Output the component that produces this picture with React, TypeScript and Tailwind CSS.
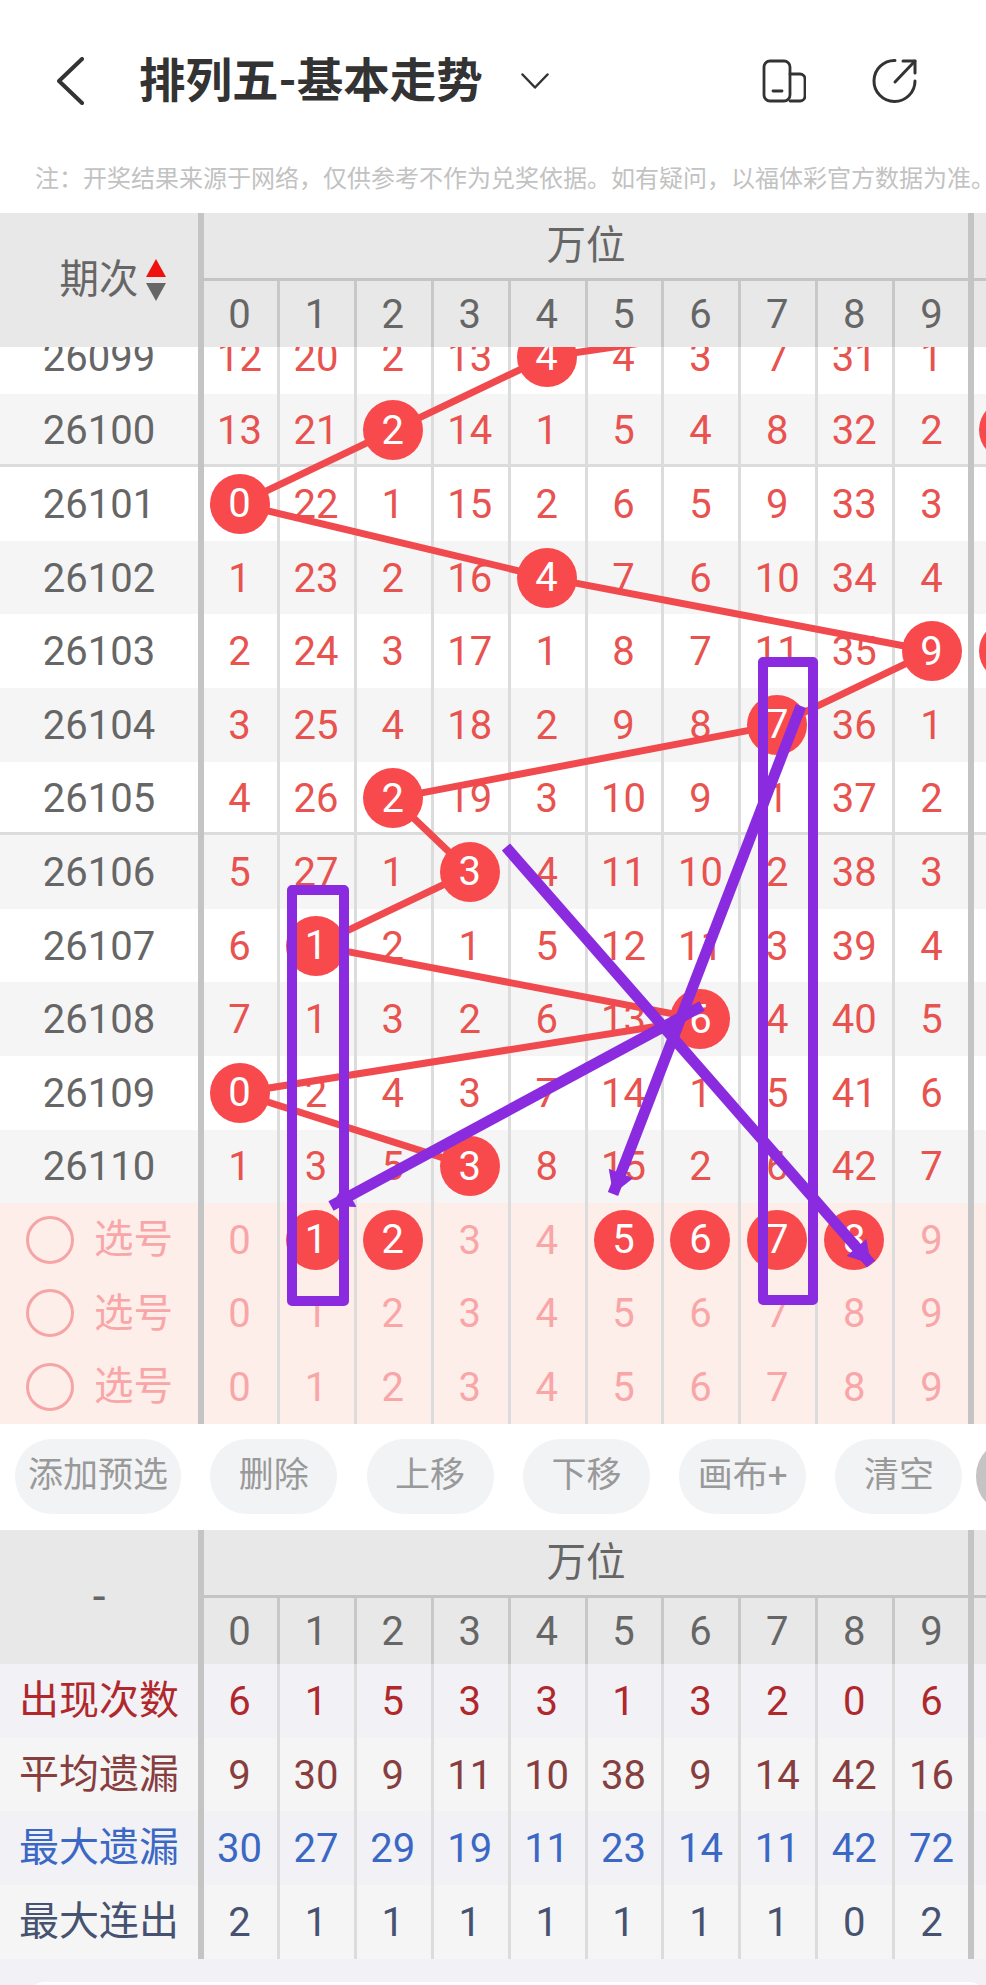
import React from 'react';

const DIGITS = [0, 1, 2, 3, 4, 5, 6, 7, 8, 9];
const CX = [239, 316, 393, 470, 547, 624, 701, 778, 855, 932];

// period, omission values, hit column, hit in the next group
const ROWS: { id: number; vals: number[]; hit: number; next?: boolean; line?: boolean }[] = [
  { id: 26099, vals: [12, 20, 2, 13, 4, 4, 3, 7, 31, 1], hit: 4 },
  { id: 26100, vals: [13, 21, 2, 14, 1, 5, 4, 8, 32, 2], hit: 2, next: true, line: true },
  { id: 26101, vals: [0, 22, 1, 15, 2, 6, 5, 9, 33, 3], hit: 0 },
  { id: 26102, vals: [1, 23, 2, 16, 4, 7, 6, 10, 34, 4], hit: 4 },
  { id: 26103, vals: [2, 24, 3, 17, 1, 8, 7, 11, 35, 9], hit: 9, next: true },
  { id: 26104, vals: [3, 25, 4, 18, 2, 9, 8, 7, 36, 1], hit: 7 },
  { id: 26105, vals: [4, 26, 2, 19, 3, 10, 9, 1, 37, 2], hit: 2, line: true },
  { id: 26106, vals: [5, 27, 1, 3, 4, 11, 10, 2, 38, 3], hit: 3 },
  { id: 26107, vals: [6, 1, 2, 1, 5, 12, 11, 3, 39, 4], hit: 1 },
  { id: 26108, vals: [7, 1, 3, 2, 6, 13, 6, 4, 40, 5], hit: 6 },
  { id: 26109, vals: [0, 2, 4, 3, 7, 14, 1, 5, 41, 6], hit: 0 },
  { id: 26110, vals: [1, 3, 5, 3, 8, 15, 2, 6, 42, 7], hit: 3 },
];

const PICKS = [[1, 2, 5, 6, 7, 8], [], []];

const STATS = [
  { label: '出现次数', vals: [6, 1, 5, 3, 3, 1, 3, 2, 0, 6], color: 'text-[#b0282c]', bg: 'bg-[#f1f1f6]' },
  { label: '平均遗漏', vals: [9, 30, 9, 11, 10, 38, 9, 14, 42, 16], color: 'text-[#873e3e]', bg: 'bg-[#f5f5f6]' },
  { label: '最大遗漏', vals: [30, 27, 29, 19, 11, 23, 14, 11, 42, 72], color: 'text-[#3a68c4]', bg: 'bg-[#f1f1f6]' },
  { label: '最大连出', vals: [2, 1, 1, 1, 1, 1, 1, 1, 0, 2], color: 'text-[#465270]', bg: 'bg-[#f5f5f6]' },
];

const BUTTONS = ['删除', '上移', '下移', '画布+', '清空'];

const cellWidth = (i: number) => {
  if (i === 0) return 'w-[76px] pr-[2px]';
  if (i === 9) return 'w-[72.9px]';
  return 'w-[76.9px] pr-[2px]';
};

const Ball = ({ n }: { n: number }) => (
  <span className="relative z-20 flex h-[60px] w-[60px] shrink-0 items-center justify-center rounded-full bg-[#f84a4d] pt-[1px] text-white">
    {n}
  </span>
);

const Cell = ({ i, border, children }: { i: number; border: string; children: React.ReactNode }) => (
  <div className={`flex shrink-0 items-center justify-center ${cellWidth(i)} ${i < 9 ? `border-r-[3px] ${border}` : ''}`}>
    {children}
  </div>
);

const Num = ({ v }: { v: number }) => <span className="pt-[2px]">{v}</span>;

const TableHead = ({ left }: { left: React.ReactNode }) => (
  <div className="flex h-[134px] bg-[#e8e8e8] text-[#666]">
    <div className="flex w-[204px] shrink-0 items-center justify-center border-r-[6px] border-[#c4c4c4]">{left}</div>
    <div className="flex flex-1 flex-col">
      <div className="flex h-[68px] border-b-[3px] border-[#c4c4c4]">
        <div className="flex w-[764px] shrink-0 items-center justify-center text-[39.5px]">万位</div>
        <div className="w-[6px] bg-[#c4c4c4]" />
      </div>
      <div className="flex flex-1">
        {DIGITS.map((d) => (
          <Cell key={d} i={d} border="border-[#c8c8c8]">
            <Num v={d} />
          </Cell>
        ))}
        <div className="w-[6px] bg-[#c4c4c4]" />
      </div>
    </div>
  </div>
);

const arrowHead = (x1: number, y1: number, x2: number, y2: number) => {
  const len = Math.hypot(x2 - x1, y2 - y1);
  const ux = (x2 - x1) / len;
  const uy = (y2 - y1) / len;
  const bx = x2 - ux * 22;
  const by = y2 - uy * 22;
  return `${x2},${y2} ${bx - uy * 13},${by + ux * 13} ${bx + uy * 13},${by - ux * 13}`;
};

const PURPLE_LINES = [
  [702, 1006, 331, 1206],
  [801, 706, 613, 1194],
  [506, 847, 871, 1264],
];

export default function App() {
  const centers = ROWS.map((r, i) => [CX[r.hit], 356.8 + 73.6 * i]);

  return (
    <div className="relative h-[1985px] w-[986px] overflow-hidden bg-white font-['Roboto','Noto_Sans_CJK_SC',sans-serif] text-[40px] leading-none">
      {/* title bar */}
      <div className="flex h-[162px] items-center pl-[57px] pr-[68px]">
        <svg width="28" height="48" viewBox="0 0 28 48" className="shrink-0" fill="none" stroke="#333" strokeWidth="4" strokeLinecap="round" strokeLinejoin="round">
          <polyline points="25,2 2,24 25,46" />
        </svg>
        <div className="ml-[54px] whitespace-nowrap text-[46.5px] font-bold text-[#333]">排列五-基本走势</div>
        <svg width="28" height="16" viewBox="0 0 28 16" className="ml-[38px] shrink-0" fill="none" stroke="#333" strokeWidth="2.5" strokeLinecap="round" strokeLinejoin="round">
          <polyline points="1.5,1.5 14,14.5 26.5,1.5" />
        </svg>
        <div className="ml-auto flex items-center gap-[66px]">
          <svg width="44" height="44" viewBox="0 0 44 44" fill="none" stroke="#333" strokeWidth="2.8" strokeLinecap="round" strokeLinejoin="round">
            <rect x="2" y="2" width="26" height="40" rx="6" />
            <path d="M28 15h10a5 5 0 0 1 5 5v17a5 5 0 0 1-5 5H28" />
            <path d="M11 32h9" />
          </svg>
          <svg width="46" height="46" viewBox="0 0 46 46" fill="none" stroke="#333" strokeWidth="3" strokeLinecap="round" strokeLinejoin="round">
            <path d="M23 2.5A20.5 20.5 0 1 0 43 23" />
            <path d="M23 24 43 3" />
            <path d="M31 3h12v12" />
          </svg>
        </div>
      </div>
      <div className="h-[51px] overflow-hidden whitespace-nowrap pl-[35px] text-[24px] leading-[34px] text-[#c2c2c2]">
        注：开奖结果来源于网络，仅供参考不作为兑奖依据。如有疑问，以福体彩官方数据为准。
      </div>

      <TableHead
        left={
          <div className="flex items-center pl-[28px] text-[39.5px]">
            <span>期次</span>
            <svg width="22" height="42" viewBox="0 0 22 42" className="ml-[6px]">
              <polygon points="11,0 21,18 1,18" fill="#f01010" />
              <polygon points="1,24 21,24 11,42" fill="#666" />
            </svg>
          </div>
        }
      />

      {/* period rows */}
      <div className="relative h-[856px] overflow-hidden text-[#e8524f]">
        <div className="-mt-[27px]">
          {ROWS.map((r, i) => (
            <div key={r.id} className={`flex h-[73.6px] ${r.line ? 'shadow-[inset_0_-3px_0_#dcdcdc]' : ''} ${i % 2 === 1 ? 'bg-[#f5f5f6]' : 'bg-white'}`}>
              <div className="flex w-[204px] shrink-0 items-center justify-center border-r-[6px] border-[#c4c4c4] text-[#666]">
                <Num v={r.id} />
              </div>
              {r.vals.map((v, k) => (
                <Cell key={k} i={k} border="border-[#dcdcdc]">
                  {k === r.hit ? <Ball n={v} /> : <Num v={v} />}
                </Cell>
              ))}
              <div className="w-[6px] shrink-0 bg-[#c4c4c4]" />
              {r.next && (
                <div className="flex items-center pl-[5px]">
                  <Ball n={0} />
                </div>
              )}
            </div>
          ))}
        </div>
        <svg className="absolute left-0 top-0 z-10" width="986" height="856" viewBox="0 347 986 856" fill="none" stroke="#f04a4e" strokeWidth="7">
          <line x1="547" y1="356.8" x2="1053" y2="283" />
          {centers.slice(1).map((c, i) => (
            <line key={i} x1={centers[i][0]} y1={centers[i][1]} x2={c[0]} y2={c[1]} />
          ))}
        </svg>
      </div>

      {/* pick rows */}
      <div className="bg-[#feeee9] text-[#f8a6a8]">
        {PICKS.map((picks, i) => (
          <div key={i} className="flex h-[73.67px]">
            <div className="flex w-[204px] shrink-0 items-center gap-[20px] border-r-[6px] border-[#c4c4c4] pl-[26px] text-[39.5px]">
              <span className="h-[48px] w-[48px] rounded-full border-[3px] border-[#f6a5a7]" />
              <span>选号</span>
            </div>
            {DIGITS.map((d) => (
              <Cell key={d} i={d} border="border-[#dcdcdc]">
                {picks.includes(d) ? <Ball n={d} /> : <Num v={d} />}
              </Cell>
            ))}
            <div className="w-[6px] shrink-0 bg-[#c4c4c4]" />
          </div>
        ))}
      </div>

      {/* actions */}
      <div className="flex h-[106px] items-center overflow-hidden pl-[15px] text-[35px] text-[#999]">
        <div className="flex h-[75px] w-[166px] shrink-0 items-center justify-center rounded-[37px] bg-[#f2f3f5] pb-[3px]">添加预选</div>
        {BUTTONS.map((b) => (
          <div key={b} className="ml-[29.3px] flex h-[75px] w-[127px] shrink-0 items-center justify-center rounded-[37px] bg-[#f2f3f5] pb-[3px]">
            {b}
          </div>
        ))}
        <div className="ml-[14px] h-[75px] w-[127px] shrink-0 rounded-[37px] bg-[#c4c4c4]" />
      </div>

      <TableHead left={<span className="pb-[2px] text-[46px]">-</span>} />

      {/* statistics */}
      {STATS.map((s) => (
        <div key={s.label} className={`flex h-[73.75px] ${s.bg} ${s.color}`}>
          <div className="flex w-[204px] shrink-0 items-center justify-center border-r-[6px] border-[#c4c4c4] text-[40px]">{s.label}</div>
          {s.vals.map((v, k) => (
            <Cell key={k} i={k} border="border-[#dcdcdc]">
              <Num v={v} />
            </Cell>
          ))}
          <div className="w-[6px] shrink-0 bg-[#c4c4c4]" />
        </div>
      ))}

      <div className="h-[27px] bg-[#f1f1f6] pl-[28px] pt-[23px]">
        <div className="h-[30px] rounded-t-[16px] bg-white" />
      </div>

      {/* hand drawn marks on top of the chart */}
      <svg className="absolute left-0 top-0 z-30" width="986" height="1985" viewBox="0 0 986 1985" fill="none" stroke="#8a2bdf" strokeWidth="10" strokeLinejoin="round">
        <rect x="292" y="890" width="52" height="411" />
        <rect x="763" y="662" width="50" height="638" />
        {PURPLE_LINES.map(([x1, y1, x2, y2], i) => (
          <g key={i}>
            <line x1={x1} y1={y1} x2={x2} y2={y2} strokeWidth="11" />
            <polygon points={arrowHead(x1, y1, x2, y2)} fill="#8a2bdf" stroke="none" />
          </g>
        ))}
      </svg>
    </div>
  );
}
